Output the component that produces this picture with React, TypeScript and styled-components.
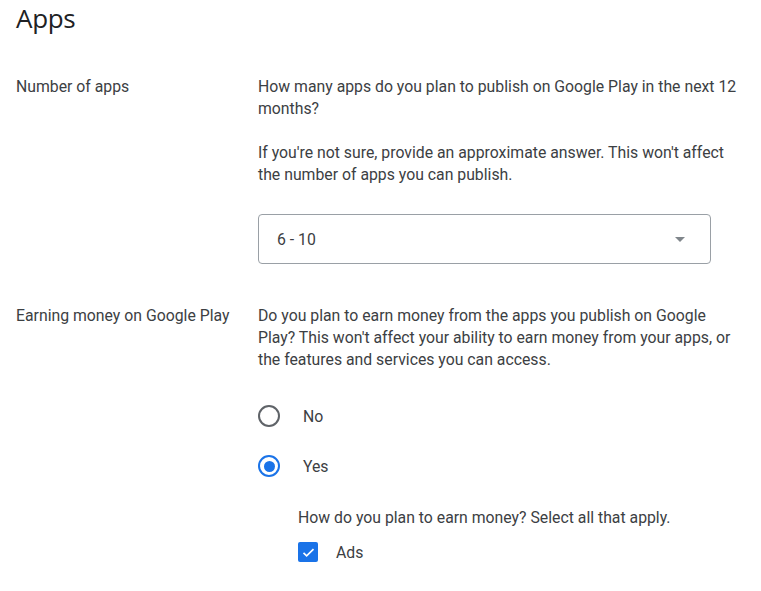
import styled, { createGlobalStyle } from "styled-components";

const GlobalStyle = createGlobalStyle`
  body {
    margin: 0;
    background: #ffffff;
    font-family: Roboto, "Liberation Sans", Arial, sans-serif;
    color: #3c4043;
  }
`;

const Page = styled.main`
  padding: 0 16px;
`;

const Title = styled.h1`
  margin: 0;
  padding-top: 2px;
  font-size: 26px;
  line-height: 32px;
  font-weight: 400;
  color: #202124;
  font-family: "Open Sans", Roboto, sans-serif;
  letter-spacing: -0.3px;
`;

const Section = styled.section<{ $top: number }>`
  display: grid;
  grid-template-columns: 242px 487px;
  margin-top: ${(p) => p.$top}px;
`;

const Label = styled.div`
  font-size: 15.8px;
  line-height: 22px;
  color: #3c4043;
`;

const Body = styled.div`
  display: flex;
  flex-direction: column;
`;

const Text = styled.p<{ $gap?: number }>`
  margin: 0;
  margin-top: ${(p) => p.$gap ?? 0}px;
  font-size: 15.8px;
  line-height: 22px;
  color: #3c4043;
`;

const Select = styled.div`
  margin-top: 28px;
  width: 453px;
  height: 50px;
  box-sizing: border-box;
  border: 1px solid #9aa0a6;
  border-radius: 4px;
  display: flex;
  align-items: center;
  justify-content: space-between;
  padding: 0 25px 0 18px;
  font-size: 15.8px;
  color: #3c4043;
`;

const Caret = styled.span`
  width: 0;
  height: 0;
  border-left: 5px solid transparent;
  border-right: 5px solid transparent;
  border-top: 5px solid #80868b;
`;

const RadioGroup = styled.div`
  margin-top: 20px;
  display: flex;
  flex-direction: column;
`;

const Option = styled.label`
  display: flex;
  align-items: center;
  height: 50px;
  gap: 23px;
  font-size: 15.8px;
  color: #3c4043;
`;

const Radio = styled.span<{ $on?: boolean }>`
  width: 22px;
  height: 22px;
  box-sizing: border-box;
  border-radius: 50%;
  border: 2px solid ${(p) => (p.$on ? "#1a73e8" : "#5f6368")};
  display: flex;
  align-items: center;
  justify-content: center;

  &::after {
    content: "";
    width: 11px;
    height: 11px;
    border-radius: 50%;
    background: ${(p) => (p.$on ? "#1a73e8" : "transparent")};
  }
`;

const SubGroup = styled.div`
  padding-left: 40px;
  margin-top: 16px;
`;

const CheckRow = styled.label`
  margin-top: 12px;
  display: flex;
  align-items: center;
  gap: 18px;
  height: 22px;
  font-size: 15.8px;
  color: #3c4043;
`;

const Checkbox = styled.span`
  width: 20px;
  height: 20px;
  border-radius: 2px;
  background: #1a73e8;
  display: flex;
  align-items: center;
  justify-content: center;
`;

export default function App() {
  return (
    <>
      <GlobalStyle />
      <Page>
        <Title>Apps</Title>
        <Section $top={42}>
          <Label>Number of apps</Label>
          <Body>
            <Text>
              How many apps do you plan to publish on Google Play in the next 12
              months?
            </Text>
            <Text $gap={22}>
              If you're not sure, provide an approximate answer. This won't
              affect the number of apps you can publish.
            </Text>
            <Select>
              <span>6 - 10</span>
              <Caret />
            </Select>
          </Body>
        </Section>
        <Section $top={41}>
          <Label>Earning money on Google Play</Label>
          <Body>
            <Text>
              Do you plan to earn money from the apps you publish on Google
              Play? This won't affect your ability to earn money from your apps,
              or the features and services you can access.
            </Text>
            <RadioGroup>
              <Option>
                <Radio />
                No
              </Option>
              <Option>
                <Radio $on />
                Yes
              </Option>
            </RadioGroup>
            <SubGroup>
              <Text>How do you plan to earn money? Select all that apply.</Text>
              <CheckRow>
                <Checkbox>
                  <svg width="15" height="15" viewBox="0 0 24 24">
                    <path
                      d="M4 12.5l5 5L20 6.5"
                      fill="none"
                      stroke="#fff"
                      strokeWidth="2.6"
                    />
                  </svg>
                </Checkbox>
                Ads
              </CheckRow>
            </SubGroup>
          </Body>
        </Section>
      </Page>
    </>
  );
}
